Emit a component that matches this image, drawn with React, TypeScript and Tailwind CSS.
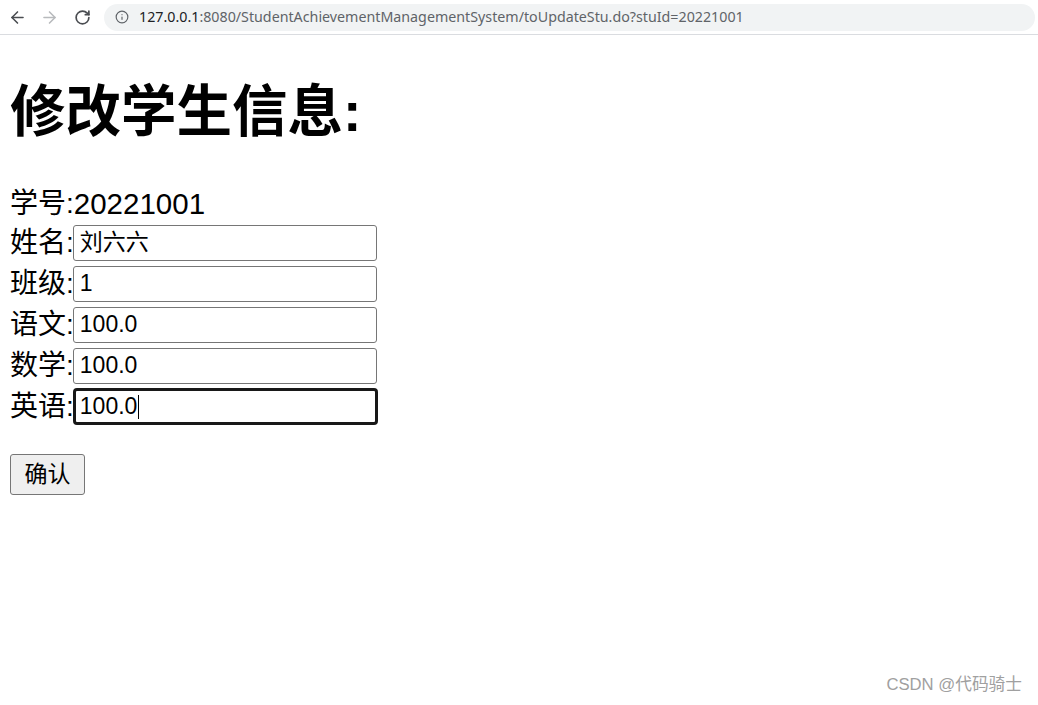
import { ArrowLeft, ArrowRight, RotateCw, Info } from "lucide-react";

const cjk = '"Liberation Sans", "Noto Sans CJK SC", sans-serif';

type Field = { label: string; value: string; focused?: boolean };

const fields: Field[] = [
  { label: "姓名", value: "刘六六" },
  { label: "班级", value: "1" },
  { label: "语文", value: "100.0" },
  { label: "数学", value: "100.0" },
  { label: "英语", value: "100.0", focused: true },
];

function BrowserBar() {
  return (
    <div className="flex h-[35px] items-center border-b border-[#dadce0] bg-white">
      <div className="flex w-[104px] items-center pl-[8px] text-[#4a4d51]">
        <ArrowLeft size={19} strokeWidth={2} />
        <ArrowRight size={19} strokeWidth={2} className="ml-[13px] text-[#b8babd]" />
        <RotateCw size={17} strokeWidth={2.4} className="ml-[15px]" />
      </div>
      <div className="mr-[3px] flex h-[27px] flex-1 items-center rounded-full bg-[#f1f3f4] pl-[11px]">
        <Info size={14} strokeWidth={2} className="text-[#5f6368]" />
        <span className="ml-[10px] text-[14.25px] text-[#5f6368]" style={{ fontFamily: '"Noto Sans", sans-serif' }}>
          <span className="text-[#202124]">127.0.0.1</span>:8080/StudentAchievementManagementSystem/toUpdateStu.do?stuId=20221001
        </span>
      </div>
    </div>
  );
}

export default function App() {
  return (
    <div className="relative h-[705px] w-[1038px] overflow-hidden bg-white text-black" style={{ fontFamily: cjk }}>
      <BrowserBar />
      <div className="pl-[10px]">
        <h1 className="mt-[40px] mb-[37px] text-[55.5px] font-bold leading-[74px]">修改学生信息:</h1>
        <div className="flex h-[36px] items-center text-[28px]">
          学号:<span className="text-[29.5px]">20221001</span>
        </div>
        {fields.map((f) => (
          <div key={f.label} className="flex h-[41px] items-center text-[28px]">
            <span className="-mr-[1px]">{f.label}:</span>
            <div
              className={
                f.focused
                  ? "flex h-[37px] w-[305px] items-center rounded-[4px] border-[3px] border-[#181818] pl-[4px] text-[23px]"
                  : "flex h-[36px] w-[304px] items-center rounded-[3px] border border-[#767676] pl-[6px] text-[23px]"
              }
            >
              {f.value}
              {f.focused && <span className="ml-[1px] inline-block h-[24px] w-[1px] bg-black" />}
            </div>
          </div>
        ))}
        <button className="mt-[27px] flex h-[41px] w-[75px] items-center justify-center rounded-[3px] border border-[#767676] bg-[#efefef] text-[23px]">
          确认
        </button>
      </div>
      <div className="absolute right-[16px] bottom-[8px] text-[16.7px] text-[#a0a0a0]">CSDN @代码骑士</div>
    </div>
  );
}
